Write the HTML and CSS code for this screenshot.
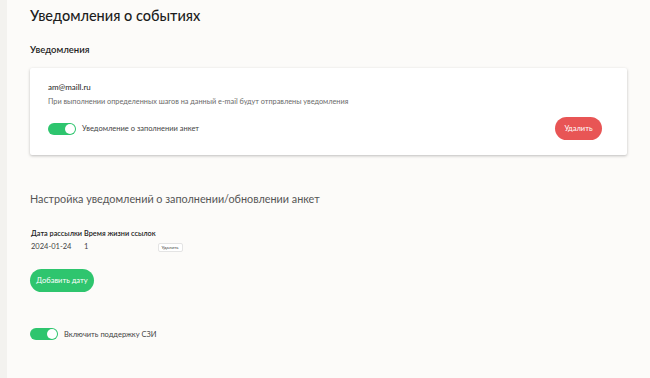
FILE: index.html
```html
<!DOCTYPE html>
<html lang="ru">

<head>
    <meta charset="UTF-8">
    <meta name="viewport" content="width=device-width, initial-scale=1.0">
    <title>Уведомления о событиях</title>
    <link rel="stylesheet" href="styles.css">
</head>

<body>
    <div class="layout">
        <div class="side"></div>
        <div class="main">
            <h1 class="title">Уведомления о событиях</h1>
            <h2 class="subtitle">Уведомления</h2>

            <!-- карточка email -->
            <div class="card">
                <div class="card-body">
                    <div class="email">am@maill.ru</div>
                    <div class="hint">При выполнении определенных шагов на данный e-mail будут отправлены уведомления</div>
                    <div class="card-row">
                        <label class="switch">
                            <span class="track"><span class="knob"></span></span>
                            <span class="switch-text">Уведомление о заполнении анкет</span>
                        </label>
                        <button class="btn btn-red">Удалить</button>
                    </div>
                </div>
            </div>

            <h3 class="section-title">Настройка уведомлений о заполнении/обновлении анкет</h3>

            <table class="dates">
                <thead>
                    <tr>
                        <th>Дата рассылки</th>
                        <th>Время жизни ссылок</th>
                        <th></th>
                    </tr>
                </thead>
                <tbody>
                    <tr>
                        <td>2024-01-24</td>
                        <td>1</td>
                        <td><button class="btn-small">Удалить</button></td>
                    </tr>
                </tbody>
            </table>

            <button class="btn btn-green">Добавить дату</button>

            <label class="switch switch-szi">
                <span class="track"><span class="knob"></span></span>
                <span class="switch-text">Включить поддержку СЗИ</span>
            </label>
        </div>
    </div>
</body>

</html>
```

FILE: styles.css
```css
* {
    margin: 0;
    padding: 0;
    box-sizing: border-box;
}

body {
    font-family: Lato, "Noto Sans", sans-serif;
    background-color: #fcfbf9;
    color: #222;
}

.layout {
    display: flex;
    min-height: 378px;
}

.side {
    width: 7px;
    background-color: #f3f2ef;
}

.main {
    flex: 1;
    padding: 5px 23px 0 23px;
}

.title {
    font-size: 14.5px;
    font-weight: 500;
    line-height: 22px;
    color: #1d1d1d;
}

.subtitle {
    margin-top: 17px;
    font-size: 9.5px;
    font-weight: 600;
    line-height: 12px;
    color: #1d1d1d;
}

.card {
    margin-top: 12px;
    width: 597px;
    background-color: #fff;
    border-radius: 2px;
    box-shadow: 0 1px 3px rgba(0, 0, 0, 0.25);
}

.card-body {
    padding: 13px 25px 15px 18px;
}

.email {
    font-size: 8px;
    line-height: 12px;
    color: #222;
}

.hint {
    margin-top: 4px;
    font-size: 7.3px;
    line-height: 10px;
    color: #6a6a6a;
}

.card-row {
    margin-top: 10px;
    display: flex;
    align-items: center;
    justify-content: space-between;
}

.switch {
    display: flex;
    align-items: center;
    gap: 6px;
}

.track {
    width: 28px;
    height: 12px;
    border-radius: 6px;
    background-color: #2ec56e;
    display: flex;
    justify-content: flex-end;
    align-items: center;
    padding: 1px;
}

.knob {
    width: 10px;
    height: 10px;
    border-radius: 50%;
    background-color: #fff;
}

.switch-text {
    font-size: 7.5px;
    color: #444;
}

.btn {
    border: none;
    border-radius: 12px;
    color: #fff;
    font-family: Lato, "Noto Sans", sans-serif;
    font-size: 7.5px;
    height: 23px;
}

.btn-red {
    width: 47px;
    background-color: #e85555;
}

.section-title {
    margin-top: 37px;
    font-size: 10.8px;
    font-weight: 400;
    line-height: 14px;
    color: #555;
}

.dates {
    margin-top: 22px;
    border-collapse: collapse;
}

.dates th {
    text-align: left;
    font-size: 7.3px;
    font-weight: 600;
    line-height: 11px;
    color: #222;
    padding: 0 1px 1px 1px;
}

.dates td {
    font-size: 7.5px;
    line-height: 10px;
    color: #444;
    padding: 2px 1px 1px 1px;
}

.btn-small {
    border: 1px solid #e4e4e4;
    border-radius: 2px;
    background-color: #fff;
    font-family: Lato, "Noto Sans", sans-serif;
    font-size: 4.5px;
    color: #444;
    padding: 1px 3px;
}

.btn-green {
    display: block;
    margin-top: 16px;
    width: 64px;
    background-color: #2ec56e;
}

.switch-szi {
    margin-top: 36px;
}
```
